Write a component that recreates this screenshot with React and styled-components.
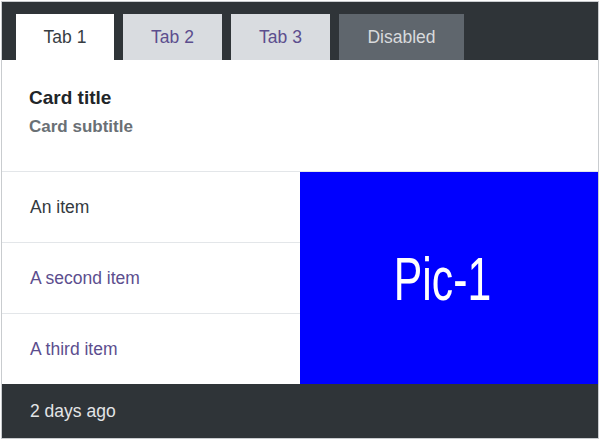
import React from 'react';
import styled, { createGlobalStyle } from 'styled-components';

const GlobalStyle = createGlobalStyle`
  body {
    margin: 0;
    font-family: "Liberation Sans", Arial, sans-serif;
    background: #ffffff;
  }
`;

const tabs = [
  { label: 'Tab 1', kind: 'active', width: 98 },
  { label: 'Tab 2', kind: 'link', width: 99 },
  { label: 'Tab 3', kind: 'link', width: 99 },
  { label: 'Disabled', kind: 'disabled', width: 125 },
];

const items = [
  { label: 'An item', link: false },
  { label: 'A second item', link: true },
  { label: 'A third item', link: true },
];

const App = () => {
  return (
    <>
      <GlobalStyle />
      <Page>
        <Card>
          <Header>
            {tabs.map((t) => (
              <Tab key={t.label} kind={t.kind} w={t.width}>{t.label}</Tab>
            ))}
          </Header>
          <Body>
            <Title>Card title</Title>
            <Subtitle>Card subtitle</Subtitle>
          </Body>
          <Split>
            <List>
              {items.map((it) => (
                <Item key={it.label} link={it.link}>{it.label}</Item>
              ))}
            </List>
            <Picture>
              <PicLabel>Pic-1</PicLabel>
            </Picture>
          </Split>
          <Footer>2 days ago</Footer>
        </Card>
      </Page>
    </>
  );
};

export default App;

const Page = styled.div`
  width: 600px;
  height: 440px;
  padding: 1px;
  box-sizing: border-box;
`;

const Card = styled.div`
  display: flex;
  flex-direction: column;
  height: 438px;
  box-sizing: border-box;
  border: 1px solid #c9cccf;
  background: #ffffff;
`;

const Header = styled.div`
  display: flex;
  gap: 9px;
  height: 58px;
  box-sizing: border-box;
  padding: 12px 0 0 14px;
  background: #2f3438;
`;

const Tab = styled.div`
  display: flex;
  align-items: center;
  justify-content: center;
  width: ${(p) => p.w}px;
  height: 46px;
  box-sizing: border-box;
  font-size: 17.5px;
  background: ${(p) =>
    p.kind === 'active' ? '#ffffff' : p.kind === 'disabled' ? '#5f666d' : '#d9dce0'};
  color: ${(p) =>
    p.kind === 'active' ? '#373d42' : p.kind === 'disabled' ? '#d8dadc' : '#5c4e8e'};
`;

const Body = styled.div`
  display: flex;
  flex-direction: column;
  gap: 8px;
  padding: 27px 28px 0 27px;
  height: 112px;
  box-sizing: border-box;
  border-bottom: 1px solid #e3e6e9;
`;

const Title = styled.div`
  font-size: 19px;
  font-weight: bold;
  line-height: 22px;
  color: #212529;
`;

const Subtitle = styled.div`
  font-size: 17px;
  font-weight: bold;
  line-height: 20px;
  color: #6a7075;
`;

const Split = styled.div`
  display: flex;
  height: 212px;
`;

const List = styled.div`
  display: flex;
  flex-direction: column;
  width: 298px;
`;

const Item = styled.div`
  display: flex;
  align-items: center;
  flex: 1;
  padding-left: 28px;
  font-size: 17.5px;
  color: ${(p) => (p.link ? '#5c4e8e' : '#343a40')};
  border-bottom: 1px solid #e3e6e9;

  &:last-child {
    border-bottom: none;
  }
`;

const Picture = styled.div`
  flex: 1;
  display: flex;
  align-items: center;
  justify-content: center;
  background: #0000ff;
`;

const PicLabel = styled.span`
  display: inline-block;
  font-size: 61px;
  color: #ffffff;
  transform: scaleX(0.7);
  margin: 2px 14px 0 0;
`;

const Footer = styled.div`
  flex: 1;
  display: flex;
  align-items: center;
  padding-left: 28px;
  font-size: 17.5px;
  color: #e3e5e7;
  background: #2f3438;
`;
